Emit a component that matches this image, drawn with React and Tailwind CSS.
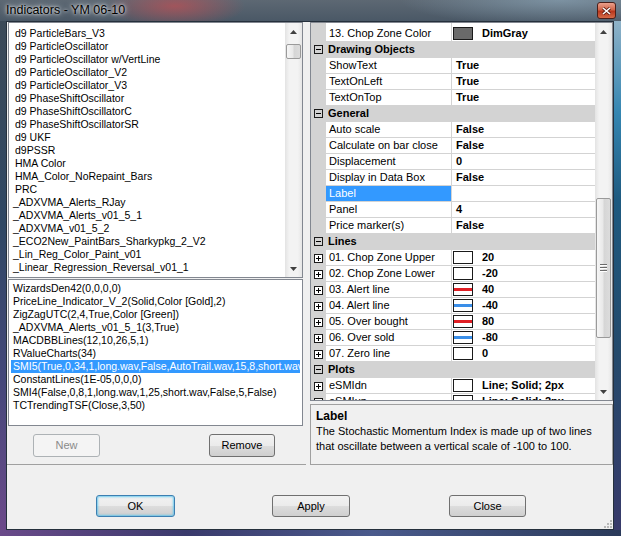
import React from 'react';

const topItems = [
    'd9 ParticleBars_V3',
    'd9 ParticleOscillator',
    'd9 ParticleOscillator w/VertLine',
    'd9 ParticleOscillator_V2',
    'd9 ParticleOscillator_V3',
    'd9 PhaseShiftOscillator',
    'd9 PhaseShiftOscillatorC',
    'd9 PhaseShiftOscillatorSR',
    'd9 UKF',
    'd9PSSR',
    'HMA Color',
    'HMA_Color_NoRepaint_Bars',
    'PRC',
    '_ADXVMA_Alerts_RJay',
    '_ADXVMA_Alerts_v01_5_1',
    '_ADXVMA_v01_5_2',
    '_ECO2New_PaintBars_Sharkypkg_2_V2',
    '_Lin_Reg_Color_Paint_v01',
    '_Linear_Regression_Reversal_v01_1',
];

const activeItems = [
    'WizardsDen42(0,0,0,0)',
    'PriceLine_Indicator_V_2(Solid,Color [Gold],2)',
    'ZigZagUTC(2,4,True,Color [Green])',
    '_ADXVMA_Alerts_v01_5_1(3,True)',
    'MACDBBLines(12,10,26,5,1)',
    'RValueCharts(34)',
    'SMI5(True,0,34,1,long.wav,False,AutoTrail.wav,15,8,short.wav,True,5,False)',
    'ConstantLines(1E-05,0,0,0)',
    'SMI4(False,0,8,1,long.wav,1,25,short.wav,False,5,False)',
    'TCTrendingTSF(Close,3,50)',
];

const rows = [
    { name: '13. Chop Zone Color', sw: 'dim', v: 'DimGray' },
    { cat: 'Drawing Objects' },
    { name: 'ShowText', v: 'True' },
    { name: 'TextOnLeft', v: 'True' },
    { name: 'TextOnTop', v: 'True' },
    { cat: 'General' },
    { name: 'Auto scale', v: 'False' },
    { name: 'Calculate on bar close', v: 'False' },
    { name: 'Displacement', v: '0' },
    { name: 'Display in Data Box', v: 'False' },
    { name: 'Label', v: '', sel: true },
    { name: 'Panel', v: '4' },
    { name: 'Price marker(s)', v: 'False' },
    { cat: 'Lines' },
    { name: '01. Chop Zone Upper', exp: true, sw: 'white', v: '20' },
    { name: '02. Chop Zone Lower', exp: true, sw: 'white', v: '-20' },
    { name: '03. Alert line', exp: true, sw: 'red', v: '40' },
    { name: '04. Alert line', exp: true, sw: 'blue', v: '-40' },
    { name: '05. Over bought', exp: true, sw: 'red', v: '80' },
    { name: '06. Over sold', exp: true, sw: 'blue', v: '-80' },
    { name: '07. Zero line', exp: true, sw: 'white', v: '0' },
    { cat: 'Plots' },
    { name: 'eSMIdn', exp: true, sw: 'white', v: 'Line; Solid; 2px' },
    { name: 'eSMIup', exp: true, sw: 'white', v: 'Line; Solid; 2px' },
];

const Arrow = ({ down }) => (
    <svg width="7" height="4" viewBox="0 0 7 4">
        <path d={down ? 'M0 0 L3.5 4 L7 0Z' : 'M0 4 L3.5 0 L7 4Z'} fill="#404040" />
    </svg>
);

// vista style scrollbar, thumb offset/height passed as literal classes
const VScroll = ({ thumbCls, grip }) => (
    <div className="w-[17px] flex flex-col bg-[linear-gradient(90deg,#e3e3e3,#f3f3f3_25%,#f3f3f3_75%,#e6e6e6)]">
        <div className="h-[17px] flex items-center justify-center shrink-0">
            <Arrow />
        </div>
        <div className={`mx-[1px] rounded-[2px] border border-[#9a9a9a] bg-[linear-gradient(90deg,#f6f6f6,#e9e9e9_45%,#d6d6d6_55%,#dcdcdc)] flex flex-col items-center justify-center gap-[1px] shrink-0 ${thumbCls}`}>
            {grip && [0, 1, 2].map((i) => (
                <div key={i} className="w-[7px] h-[2px] border-t border-[#6b6b6b] bg-white" />
            ))}
        </div>
        <div className="flex-1" />
        <div className="h-[17px] flex items-center justify-center shrink-0">
            <Arrow down />
        </div>
    </div>
);

const Box = ({ plus, fill }) => (
    <svg width="9" height="9" viewBox="0 0 9 9">
        <rect x="0.5" y="0.5" width="8" height="8" fill={fill} stroke="#1a1a1a" />
        <path d="M2 4.5h5" stroke="#000" />
        {plus && <path d="M4.5 2v5" stroke="#000" />}
    </svg>
);

const Swatch = ({ kind }) => (
    <div className={`w-[20px] h-[13px] border border-[#1a1a1a] flex items-center shrink-0 ${kind === 'dim' ? 'bg-[#6a6a6a]' : 'bg-white'}`}>
        {kind === 'red' && <div className="w-full h-[3px] bg-[#e01e24]" />}
        {kind === 'blue' && <div className="w-full h-[3px] bg-[#3a8ee8]" />}
    </div>
);

const Btn = ({ children, className = '', disabled, focus }) => (
    <div
        className={`h-[22px] flex items-center justify-center rounded-[3px] border text-[11px] ${disabled
            ? 'border-[#adb2b5] bg-[#f4f4f4] text-[#8a8a8a]'
            : focus
                ? 'border-[#3c7fb1] bg-[linear-gradient(180deg,#f2f2f2_0%,#ebebeb_50%,#dddddd_50%,#cfcfcf_100%)] shadow-[inset_0_0_2px_1px_rgba(72,192,240,0.75)] text-black'
                : 'border-[#707070] bg-[linear-gradient(180deg,#f2f2f2_0%,#ebebeb_50%,#dddddd_50%,#cfcfcf_100%)] text-black'
            } ${className}`}
    >
        {children}
    </div>
);

function GridRow({ r }) {
    if (r.cat) {
        return (
            <div className="h-[16px] flex items-center bg-[#d3d3d3] border-b border-[#d3d3d3] shrink-0">
                <div className="w-[15px] flex items-center justify-center">
                    <Box fill="none" />
                </div>
                <span className="pl-[2px] font-bold">{r.cat}</span>
            </div>
        );
    }
    return (
        <div className="h-[16px] flex shrink-0">
            <div className="w-[15px] bg-[#d3d3d3] flex items-center justify-center">
                {r.exp && <Box plus fill="#fff" />}
            </div>
            <div className={`w-[126px] border-r border-b border-[#d3d3d3] pl-[3px] flex items-center whitespace-nowrap overflow-hidden ${r.sel ? 'bg-[#3399ff] text-white' : 'bg-white'}`}>
                {r.name}
            </div>
            <div className="flex-1 border-b border-[#d3d3d3] bg-white flex items-center font-bold whitespace-nowrap overflow-hidden">
                {r.sw ? (
                    <>
                        <div className="ml-[1px]"><Swatch kind={r.sw} /></div>
                        <span className="ml-[9px]">{r.v}</span>
                    </>
                ) : (
                    <span className="pl-[4px]">{r.v}</span>
                )}
            </div>
        </div>
    );
}

export default function App() {
    return (
        <div className="w-[621px] h-[536px] flex flex-col overflow-hidden font-['Liberation_Sans',Arial,sans-serif] text-black">
            {/* glass title bar */}
            <div className="h-[21px] shrink-0 flex items-start justify-between bg-[radial-gradient(ellipse_70px_22px_at_175px_6px,rgba(185,80,85,0.75),transparent),radial-gradient(ellipse_160px_26px_at_560px_0px,rgba(150,180,200,0.55),transparent),linear-gradient(180deg,#5d6873,#4a5866)]">
                <span className="ml-[6px] mt-[3px] text-[12.5px] leading-[15px] [text-shadow:0_0_6px_rgba(255,255,255,0.95),0_0_3px_rgba(255,255,255,0.9)]">
                    Indicators - YM 06-10
                </span>
                <div className="mr-[5px] mt-[2px] w-[19px] h-[17px] rounded-[3px] border border-[#4a1f1a] bg-[linear-gradient(180deg,#eba08c_0%,#d0654a_45%,#b8361c_55%,#d46a48_100%)] flex items-center justify-center">
                    <svg width="9" height="8" viewBox="0 0 9 8">
                        <path d="M1 1 L8 7 M8 1 L1 7" stroke="#5a1a10" strokeWidth="3" />
                        <path d="M1 1 L8 7 M8 1 L1 7" stroke="#fff" strokeWidth="1.6" />
                    </svg>
                </div>
            </div>

            <div className="flex flex-1 min-h-0">
                <div className="w-[6px] bg-[linear-gradient(180deg,#3c4a58_0%,#2f4864_40%,#44487a_70%,#6c4a8a_100%)]" />

                {/* client area */}
                <div className="flex-1 flex flex-col border border-[#25303c] bg-[#f0f0f0]">
                    <div className="flex h-[443px] shrink-0">
                        {/* left pane */}
                        <div className="w-[299px] flex flex-col border-b border-[#a0a0a0]">
                            <div className="ml-[1px] w-[295px] h-[256px] border border-[#828790] bg-white flex">
                                <div className="flex-1 pt-[4px] pl-[6px] overflow-hidden text-[10.5px] leading-[13px]">
                                    {topItems.map((t) => (
                                        <div key={t} className={`h-[13px] whitespace-nowrap ${t.startsWith('_') ? '-ml-[2px]' : ''}`}>{t}</div>
                                    ))}
                                </div>
                                <VScroll thumbCls="mt-[4px] h-[15px]" />
                            </div>
                            <div className="ml-[1px] mt-[1px] w-[295px] h-[147px] border border-[#828790] bg-white px-[2px] pt-[2px] overflow-hidden text-[10.5px] leading-[13px]">
                                {activeItems.map((t, i) => (
                                    <div key={t} className={`h-[13px] pl-[2px] whitespace-nowrap overflow-hidden ${i === 6 ? 'bg-[#3399ff] text-white' : ''}`}>{t}</div>
                                ))}
                            </div>
                            <div className="mt-[8px] flex">
                                <Btn disabled className="ml-[26px] w-[67px] h-[23px]">New</Btn>
                                <Btn className="ml-[109px] w-[66px] h-[23px]">Remove</Btn>
                            </div>
                        </div>

                        {/* right pane */}
                        <div className="ml-[4px] w-[303px] flex flex-col">
                            <div className="h-[379px] border border-[#828790] bg-white flex text-[11px] leading-[15px]">
                                <div className="flex-1 flex flex-col overflow-hidden">
                                    <div className="h-[3px] flex shrink-0">
                                        <div className="w-[15px] bg-[#d3d3d3]" />
                                        <div className="w-[126px] border-r border-[#d3d3d3]" />
                                    </div>
                                    {rows.map((r, i) => (
                                        <GridRow key={i} r={r} />
                                    ))}
                                </div>
                                <VScroll grip thumbCls="mt-[158px] h-[140px]" />
                            </div>
                            <div className="mt-[3px] h-[61px] border border-[#a0a0a0] px-[5px] pt-[4px] text-[11px] leading-[15px]">
                                <div className="font-bold text-[12px] leading-[15px]">Label</div>
                                <div>The Stochastic Momentum Index is made up of two lines</div>
                                <div>that oscillate between a vertical scale of -100 to 100.</div>
                            </div>
                        </div>
                    </div>

                    {/* dialog buttons */}
                    <div className="flex-1 flex flex-col">
                        <div className="mt-[30px] flex">
                            <Btn focus className="ml-[89px] w-[79px]">OK</Btn>
                            <Btn className="ml-[97px] w-[78px]">Apply</Btn>
                            <Btn className="ml-[99px] w-[77px]">Close</Btn>
                        </div>
                        <div className="flex-1" />
                        <div className="flex justify-end pr-[1px] pb-[1px]">
                            <svg width="9" height="9" viewBox="0 0 9 9">
                                <rect x="7" y="1" width="2" height="2" fill="#b8b8b8" />
                                <rect x="4" y="4" width="2" height="2" fill="#b8b8b8" />
                                <rect x="7" y="4" width="2" height="2" fill="#b8b8b8" />
                                <rect x="1" y="7" width="2" height="2" fill="#b8b8b8" />
                                <rect x="4" y="7" width="2" height="2" fill="#b8b8b8" />
                                <rect x="7" y="7" width="2" height="2" fill="#b8b8b8" />
                            </svg>
                        </div>
                    </div>
                </div>

                <div className="w-[7px] bg-[linear-gradient(180deg,#8fb2c8_0%,#3486b2_18%,#1e5a80_35%,#244a6c_65%,#383a6a_100%)]" />
            </div>
            <div className="h-[6px] shrink-0 bg-[linear-gradient(90deg,#6a4a8a_0%,#3a3a6c_30%,#4a5a8c_60%,#2a3a5a_100%)]" />
        </div>
    );
}
